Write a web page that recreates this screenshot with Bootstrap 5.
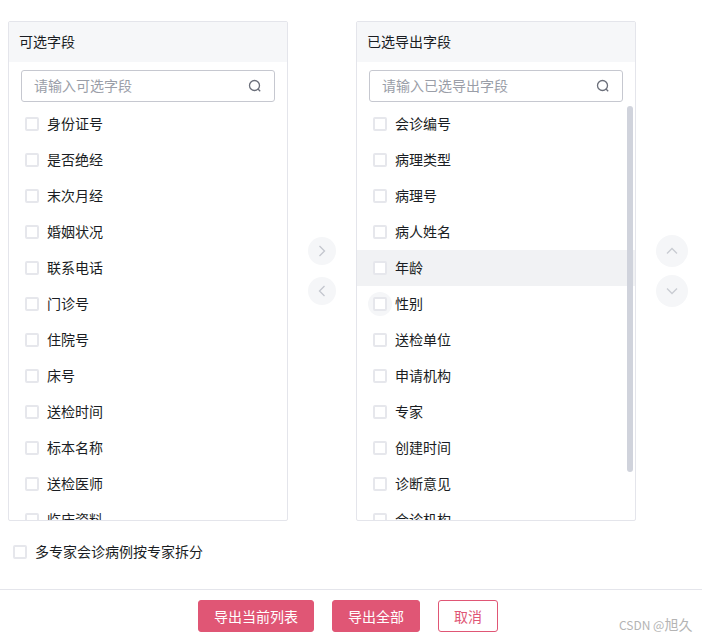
<!DOCTYPE html>
<html lang="zh-CN">
<head>
<meta charset="utf-8">
<title>导出字段</title>
<link href="https://cdn.jsdelivr.net/npm/bootstrap@5.3.0/dist/css/bootstrap.min.css" rel="stylesheet">
<style>
html,body{height:637px;overflow:hidden;}
body{font-family:"Noto Sans CJK SC","Liberation Sans",sans-serif;font-size:14px;color:#1a1d23;background:#fff;position:relative;}
.xfer{padding:21px 0 0 8px;}
.pane{width:280px;height:500px;border:1px solid #e4e5eb;border-radius:2px;overflow:hidden;position:relative;flex:none;}
.pane .card-header{height:40px;padding:0 10px;line-height:39px;background:#f6f7f9;border:0;border-radius:0;font-size:14px;color:#1a1d23;flex:none;}
.srch{margin:8px 12px 4px;height:32px;border:1px solid #c6c8d0;border-radius:3px;padding:0 12px;flex:none;}
.srch span{color:#9a9ea8;font-size:14px;line-height:28px;height:30px;}
.pane .list-group.rows{flex:none;border:0;border-radius:0;}
.rows .fld{height:36px;padding:0 0 0 16px;gap:8px;border:0;color:#1a1d23;font-size:14px;background:transparent;flex:none;position:relative;}
.rows .fld.hov{background:#f1f2f4;}
.tick{width:14px;height:14px;border:2px solid #e6e7ec;border-radius:2px;background:#fff;flex:none;position:relative;}
.fld b,.opt b{font-weight:400;line-height:20px;margin-top:-2px;}
.glow{position:absolute;left:11px;top:6px;width:24px;height:24px;border-radius:50%;background:#f5f6f8;}
.thumb{position:absolute;right:2px;top:84px;width:6px;height:366px;border-radius:3px;background:#d0d3dc;}
.mid{width:68px;gap:12px;flex:none;}
.rnd{width:28px;height:28px;border-radius:50%;background:#f5f6f8;}
.side{width:32px;gap:8px;margin-left:20px;flex:none;}
.side .rnd{width:32px;height:32px;}
.opt{margin:24px 0 0 13px;height:14px;gap:8px;color:#1a1d23;}
.foot{margin-top:30px;border-top:1px solid #e4e5eb;padding:10px 6px 0 0;gap:18px;}
.btnx{height:32px;padding:0 15px;border-radius:3px;font-size:14px;line-height:28px;border:1px solid #e05675;}
.btnx.fill{background:#e05675;color:#fff;}
.btnx.line{background:#fff;color:#e05675;}
.wm{position:absolute;left:619px;top:615px;font-size:12px;line-height:18px;color:#b4b4b4;white-space:nowrap;}
.wm span{font-size:14px;}
</style>
</head>
<body>
<div class="xfer d-flex">
  <div class="card pane">
    <div class="card-header">可选字段</div>
    <div class="srch d-flex align-items-center justify-content-between"><span>请输入可选字段</span>
      <svg width="14" height="14" viewBox="0 0 14 14" fill="none" stroke="#6b6f7a" stroke-width="1.3"><circle cx="6.5" cy="6.5" r="5"/><path d="M10 10l2.2 2.2"/></svg></div>
    <div class="list-group list-group-flush rows">
      <div class="list-group-item fld d-flex align-items-center"><i class="tick"></i><b>身份证号</b></div>
      <div class="list-group-item fld d-flex align-items-center"><i class="tick"></i><b>是否绝经</b></div>
      <div class="list-group-item fld d-flex align-items-center"><i class="tick"></i><b>末次月经</b></div>
      <div class="list-group-item fld d-flex align-items-center"><i class="tick"></i><b>婚姻状况</b></div>
      <div class="list-group-item fld d-flex align-items-center"><i class="tick"></i><b>联系电话</b></div>
      <div class="list-group-item fld d-flex align-items-center"><i class="tick"></i><b>门诊号</b></div>
      <div class="list-group-item fld d-flex align-items-center"><i class="tick"></i><b>住院号</b></div>
      <div class="list-group-item fld d-flex align-items-center"><i class="tick"></i><b>床号</b></div>
      <div class="list-group-item fld d-flex align-items-center"><i class="tick"></i><b>送检时间</b></div>
      <div class="list-group-item fld d-flex align-items-center"><i class="tick"></i><b>标本名称</b></div>
      <div class="list-group-item fld d-flex align-items-center"><i class="tick"></i><b>送检医师</b></div>
      <div class="list-group-item fld d-flex align-items-center"><i class="tick"></i><b>临床资料</b></div>
    </div>
  </div>
  <div class="mid d-flex flex-column align-items-center justify-content-center">
    <div class="rnd d-flex align-items-center justify-content-center"><svg width="10" height="12" viewBox="0 0 10 12" fill="none" stroke="#c3c6ce" stroke-width="1.3"><path d="M2.5 1l5 5-5 5"/></svg></div>
    <div class="rnd d-flex align-items-center justify-content-center"><svg width="10" height="12" viewBox="0 0 10 12" fill="none" stroke="#c3c6ce" stroke-width="1.3"><path d="M7.5 1l-5 5 5 5"/></svg></div>
  </div>
  <div class="card pane">
    <div class="card-header">已选导出字段</div>
    <div class="srch d-flex align-items-center justify-content-between"><span>请输入已选导出字段</span>
      <svg width="14" height="14" viewBox="0 0 14 14" fill="none" stroke="#6b6f7a" stroke-width="1.3"><circle cx="6.5" cy="6.5" r="5"/><path d="M10 10l2.2 2.2"/></svg></div>
    <div class="list-group list-group-flush rows">
      <div class="list-group-item fld d-flex align-items-center"><i class="tick"></i><b>会诊编号</b></div>
      <div class="list-group-item fld d-flex align-items-center"><i class="tick"></i><b>病理类型</b></div>
      <div class="list-group-item fld d-flex align-items-center"><i class="tick"></i><b>病理号</b></div>
      <div class="list-group-item fld d-flex align-items-center"><i class="tick"></i><b>病人姓名</b></div>
      <div class="list-group-item fld hov d-flex align-items-center"><i class="tick"></i><b>年龄</b></div>
      <div class="list-group-item fld d-flex align-items-center"><span class="glow"></span><i class="tick"></i><b>性别</b></div>
      <div class="list-group-item fld d-flex align-items-center"><i class="tick"></i><b>送检单位</b></div>
      <div class="list-group-item fld d-flex align-items-center"><i class="tick"></i><b>申请机构</b></div>
      <div class="list-group-item fld d-flex align-items-center"><i class="tick"></i><b>专家</b></div>
      <div class="list-group-item fld d-flex align-items-center"><i class="tick"></i><b>创建时间</b></div>
      <div class="list-group-item fld d-flex align-items-center"><i class="tick"></i><b>诊断意见</b></div>
      <div class="list-group-item fld d-flex align-items-center"><i class="tick"></i><b>会诊机构</b></div>
    </div>
    <div class="thumb"></div>
  </div>
  <div class="side d-flex flex-column justify-content-center">
    <div class="rnd d-flex align-items-center justify-content-center"><svg width="12" height="10" viewBox="0 0 12 10" fill="none" stroke="#c9ccd3" stroke-width="1.3"><path d="M1 7.5l5-5 5 5"/></svg></div>
    <div class="rnd d-flex align-items-center justify-content-center"><svg width="12" height="10" viewBox="0 0 12 10" fill="none" stroke="#c9ccd3" stroke-width="1.3"><path d="M1 2.5l5 5 5-5"/></svg></div>
  </div>
</div>
<div class="opt d-flex align-items-center"><i class="tick"></i><b>多专家会诊病例按专家拆分</b></div>
<div class="foot d-flex justify-content-center">
  <button type="button" class="btn btnx fill">导出当前列表</button>
  <button type="button" class="btn btnx fill">导出全部</button>
  <button type="button" class="btn btnx line">取消</button>
</div>
<div class="wm">CSDN @<span>旭久</span></div>
<script src="https://cdn.jsdelivr.net/npm/bootstrap@5.3.0/dist/js/bootstrap.bundle.min.js"></script>
</body>
</html>
